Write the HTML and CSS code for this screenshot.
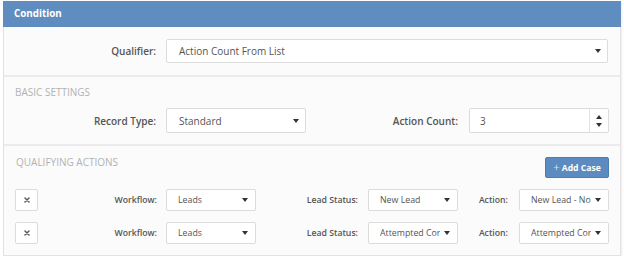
FILE: index.html
```html
<!DOCTYPE html>
<html>
<head>
<meta charset="utf-8">
<link rel="stylesheet" href="styles.css">
</head>
<body>
<div class="panel">
  <div class="panel-heading">Condition</div>

  <div class="section sec-qualifier">
    <div class="form-row">
      <label class="lbl lbl-main">Qualifier:</label>
      <div class="select sel-qualifier"><span class="val">Action Count From List</span><span class="caret"></span></div>
    </div>
  </div>

  <div class="section sec-basic">
    <div class="section-title">Basic Settings</div>
    <div class="form-row">
      <label class="lbl lbl-main">Record Type:</label>
      <div class="select sel-record"><span class="val">Standard</span><span class="caret"></span></div>
      <label class="lbl lbl-count">Action Count:</label>
      <div class="spin">
        <span class="val">3</span>
        <span class="spin-btns"><span class="up"></span><span class="down"></span></span>
      </div>
    </div>
  </div>

  <div class="section sec-actions">
    <div class="actions-head">
      <div class="section-title title-actions">Qualifying Actions</div>
      <button class="btn-add"><span class="plus">+</span> Add Case</button>
    </div>

    <div class="case-row">
      <button class="btn-del"><svg width="6" height="6" viewBox="0 0 6 6"><path d="M1 1L5 5M5 1L1 5" stroke="#5a5a66" stroke-width="1.5" stroke-linecap="round"/></svg></button>
      <label class="lbl lbl-wf">Workflow:</label>
      <div class="select sel-sm"><span class="val">Leads</span><span class="caret"></span></div>
      <label class="lbl lbl-ls">Lead Status:</label>
      <div class="select sel-sm"><span class="val">New Lead</span><span class="caret"></span></div>
      <label class="lbl lbl-ac">Action:</label>
      <div class="select sel-sm"><span class="val">New Lead - No</span><span class="caret"></span></div>
    </div>

    <div class="case-row">
      <button class="btn-del"><svg width="6" height="6" viewBox="0 0 6 6"><path d="M1 1L5 5M5 1L1 5" stroke="#5a5a66" stroke-width="1.5" stroke-linecap="round"/></svg></button>
      <label class="lbl lbl-wf">Workflow:</label>
      <div class="select sel-sm"><span class="val">Leads</span><span class="caret"></span></div>
      <label class="lbl lbl-ls">Lead Status:</label>
      <div class="select sel-sm"><span class="val">Attempted Cor</span><span class="caret"></span></div>
      <label class="lbl lbl-ac">Action:</label>
      <div class="select sel-sm"><span class="val">Attempted Cor</span><span class="caret"></span></div>
    </div>
  </div>
</div>
</body>
</html>
```

FILE: styles.css
```css
* { box-sizing: border-box; }
html, body { margin: 0; padding: 0; background: #ffffff; }
body { font-family: "Open Sans", "DejaVu Sans", sans-serif; color: #555; }

.panel {
  width: 618px;
  margin: 1px 3px 0 3px;
  border: 1px solid #e2e2e2;
  border-top: none;
  background: #fbfbfb;
  box-shadow: 1px 1px 2px rgba(0,0,0,0.08);
}

.panel-heading {
  height: 26px;
  margin: 0 -1px;
  padding-left: 11px;
  background: #5f8dbf;
  color: #fff;
  font-weight: 700;
  font-size: 9.8px;
  line-height: 26px;
}

.section { border-bottom: 2px solid #ebebeb; }
.sec-actions { border-bottom: none; padding: 11px 11px 11px 11px; }
.sec-qualifier { padding: 12px 12px 12px 0; }
.sec-basic { padding: 8px 11px 11px 0; }

.section-title {
  font-size: 10px;
  line-height: 14px;
  text-transform: uppercase;
  color: #b2b2b2;
  padding-left: 11px;
  margin-bottom: 9px;
}
.title-actions { padding-left: 1px; margin: -2px 0 0 0; }

.form-row { display: flex; align-items: center; }

.lbl {
  text-align: right;
  font-weight: 600;
  font-size: 10px;
  color: #555;
  flex: none;
}
.lbl-main { width: 152px; margin-right: 10px; }
.lbl-count { width: 152px; margin-right: 11px; }

.select, .spin {
  display: flex;
  align-items: center;
  background: #fff;
  border: 1px solid #dcdcdc;
  border-radius: 2px;
  flex: none;
}
.select { padding: 0 6px 0 12px; }
.val {
  flex: 1;
  overflow: hidden;
  white-space: nowrap;
  font-size: 10px;
  color: #555;
}
.caret {
  flex: none;
  width: 0; height: 0;
  border-left: 3px solid transparent;
  border-right: 3px solid transparent;
  border-top: 4px solid #333;
  margin-left: 4px;
}

.sel-qualifier { flex: 1; height: 24px; }
.sel-record { width: 140px; height: 25px; }
.spin { width: 140px; height: 25px; padding-left: 10px; }
.spin-btns {
  flex: none;
  width: 19px;
  height: 100%;
  border-left: 1px solid #e2e2e2;
  display: flex;
  flex-direction: column;
  align-items: center;
  justify-content: center;
  gap: 4px;
}
.up {
  width: 0; height: 0;
  border-left: 3px solid transparent;
  border-right: 3px solid transparent;
  border-bottom: 4px solid #333;
}
.down {
  width: 0; height: 0;
  border-left: 3px solid transparent;
  border-right: 3px solid transparent;
  border-top: 4px solid #333;
}

.actions-head {
  display: flex;
  justify-content: space-between;
  align-items: flex-start;
  margin-bottom: 11px;
}
.btn-add {
  width: 64px;
  height: 21px;
  padding: 0;
  background: #5b8bc0;
  border: 1px solid #4d7cb0;
  border-radius: 2px;
  color: #fff;
  font-family: "Open Sans", "DejaVu Sans", sans-serif;
  font-weight: 700;
  font-size: 8.6px;
}
.plus { font-weight: 400; font-size: 11px; color: #d6e3f2; line-height: 1; }

.case-row { display: flex; align-items: center; height: 22px; }
.case-row + .case-row { margin-top: 11px; }
.btn-del {
  width: 23px;
  height: 22px;
  padding: 0;
  background: #fff;
  border: 1px solid #dcdcdc;
  border-radius: 2px;
  display: flex;
  align-items: center;
  justify-content: center;
  flex: none;
}
.case-row .lbl { font-size: 8.7px; }
.lbl-wf { width: 119px; margin-right: 9px; }
.lbl-ls { width: 102px; margin-right: 10px; }
.lbl-ac { width: 50px; margin-right: 11px; }
.sel-sm { width: 90px; height: 22px; padding: 0 7px 0 11px; }
.sel-sm .val { font-size: 8.8px; }
```
